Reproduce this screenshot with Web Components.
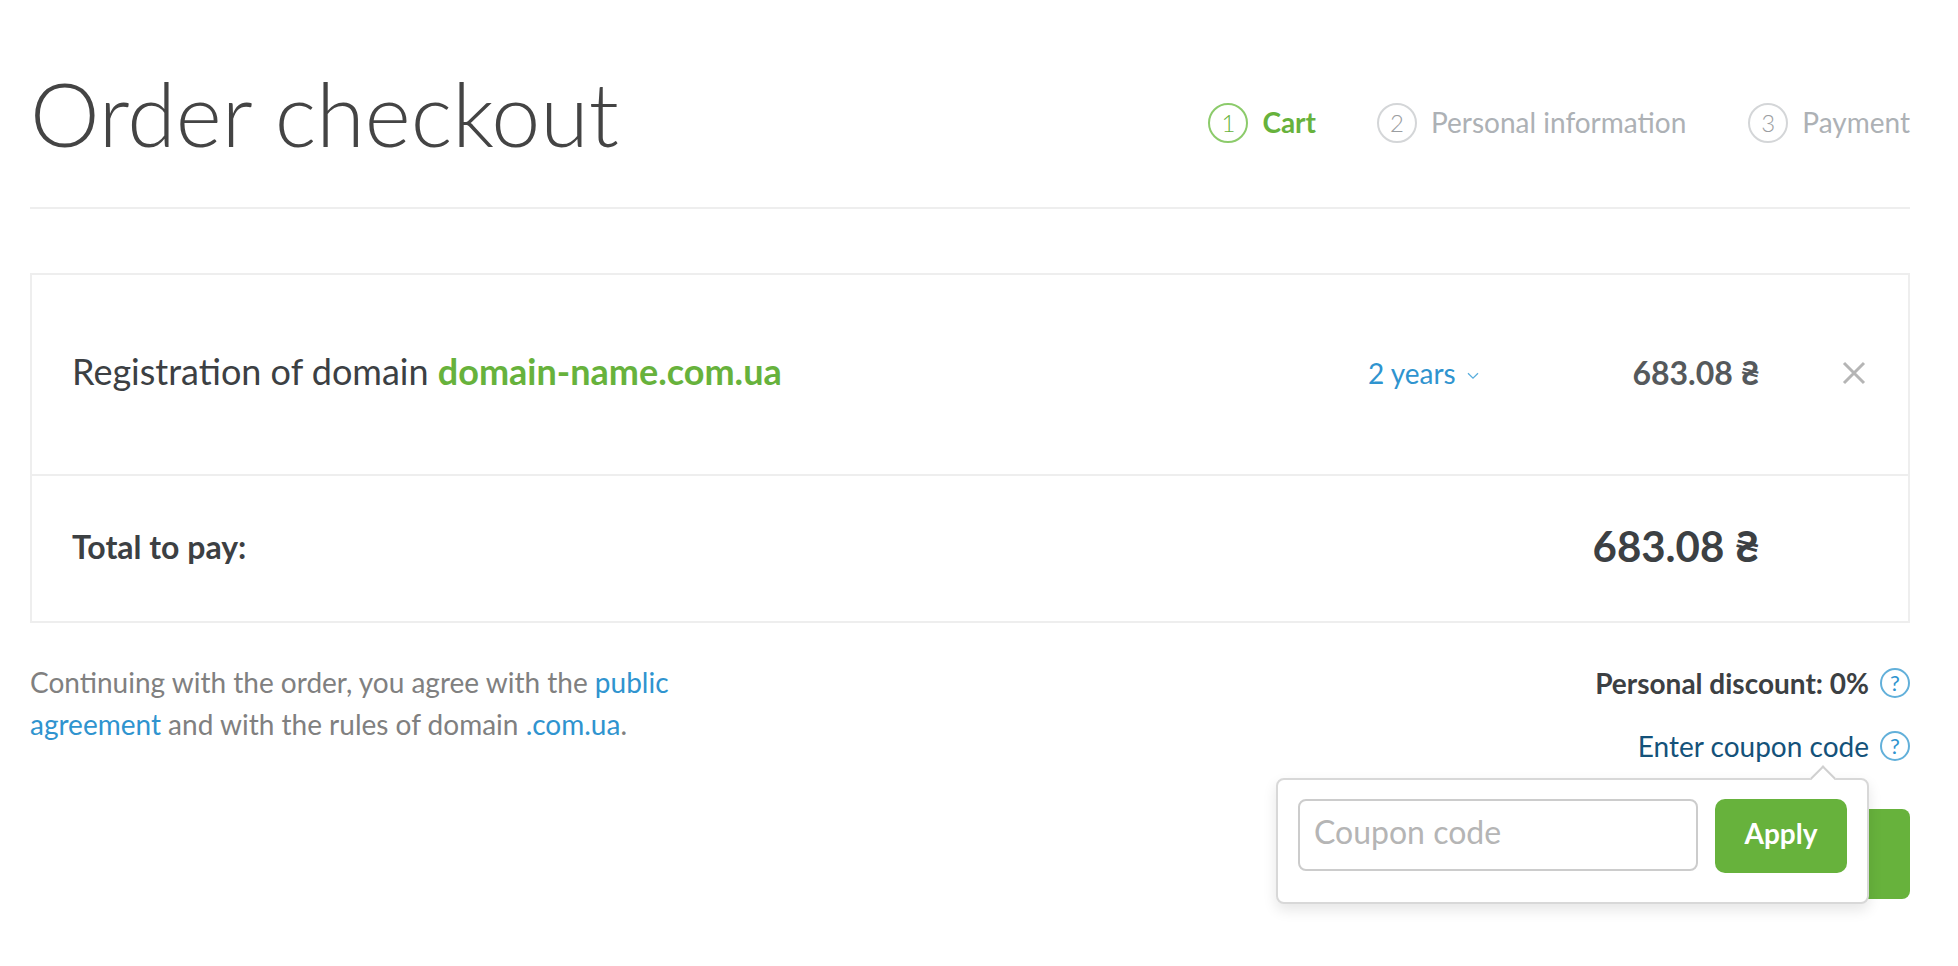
<!DOCTYPE html>
<html lang="en"><head><meta charset="utf-8"><title>Order checkout</title>
<style>html,body{margin:0;background:#fff}body{font-family:Lato,"Liberation Sans",sans-serif;color:#3c4043}</style></head>
<body>
<order-page></order-page>
<script>
const def=(name,html,init)=>customElements.define(name,class extends HTMLElement{constructor(){super();this.attachShadow({mode:'open'}).innerHTML=html;if(init)init.call(this)}});
const qmark=`<svg width="30" height="30" viewBox="0 0 30 30"><circle cx="15" cy="15" r="14" fill="none" stroke="#62b0da" stroke-width="2"/><text x="15" y="23" text-anchor="middle" font-family="Lato" font-size="22" font-weight="400" fill="#2f94cf">?</text></svg>`;
def('help-icon',`<style>:host{display:inline-flex;width:30px;height:30px;flex:none}</style>${qmark}`);
def('check-step',`<style>:host{display:flex;align-items:center;gap:14px;font-size:28px;color:#adb1b5}
.n{flex:none;box-sizing:border-box;width:40px;height:40px;border:2px solid #d4d6d8;border-radius:50%;display:flex;align-items:center;justify-content:center;font-size:24px;font-weight:300;color:#9b9ea1}
.t{margin-top:-2px}
:host([active]){color:#67b23c;font-weight:700;margin-right:-1px}:host([active]) .n{border-color:#8ccb6b;color:#67b23c;font-weight:300}</style>
<span class="n"><slot name="n"></slot></span><span class="t"><slot></slot></span>`);
def('check-header',`<style>:host{display:flex;justify-content:space-between;align-items:center;height:145px;border-bottom:2px solid #eee;box-sizing:content-box;padding-top:62px}
h1{margin:-43px 0 0;font-size:88px;font-weight:300;color:#444;line-height:1;letter-spacing:0}
nav{display:flex;gap:62px;margin-top:-24px}</style>
<h1>Order checkout</h1><nav><check-step active><span slot="n">1</span>Cart</check-step><check-step><span slot="n">2</span>Personal information</check-step><check-step><span slot="n">3</span>Payment</check-step></nav>`);
def('order-table',`<style>:host{display:block;border:2px solid #eee;margin-top:64px}
.row{display:flex;align-items:center;padding:0 40px}
.item{height:201px;border-bottom:2px solid #eee;font-size:36px;padding-bottom:4px;box-sizing:border-box}
.name{margin-top:-3px}
.name b{color:#67b23c}
.years{margin-left:auto;width:160px;color:#2f94cf;font-size:28px;display:flex;align-items:center;gap:11px}
.years svg{margin-top:7px}
.price{width:232px;text-align:right;font-weight:700;font-size:32px;color:#55595c;margin-top:-1px}
.years,.price{flex:none}
.x{margin-left:82px;margin-right:2px;width:24px;height:24px;display:block}
.total{height:145px;font-size:32px;font-weight:700;padding-bottom:4px;box-sizing:border-box}
.total .price{margin-left:auto;width:auto;font-size:42px;color:#3c4043;margin-right:108px;margin-top:-2px}</style>
<div class="row item"><span class="name">Registration of domain <b>domain-name.com.ua</b></span>
<span class="years">2 years<svg width="12" height="8" viewBox="0 0 12 8"><path d="M1 1.2l5 5 5-5" fill="none" stroke="#5aaedd" stroke-width="1.3"/></svg></span>
<span class="price">683.08 ₴</span>
<svg class="x" viewBox="0 0 24 24"><path d="M2 2l20 20M22 2L2 22" stroke="#b5b5b5" stroke-width="3" fill="none"/></svg></div>
<div class="row total"><span>Total to pay:</span><span class="price">683.08 ₴</span></div>`);
def('coupon-popover',`<style>:host{position:absolute;right:41px;top:116px;width:593px;height:126px;box-sizing:border-box;background:#fff;border:2px solid #d8d8d8;border-radius:8px;box-shadow:0 6px 14px rgba(0,0,0,.1);display:flex;align-items:center;gap:17px;padding:0 20px 12px}
.arrow{position:absolute;right:35px;top:-11px;width:18px;height:18px;box-sizing:border-box;background:#fff;border:solid #d0d0d0;border-width:2px 0 0 2px;transform:rotate(45deg)}
input{width:400px;height:72px;box-sizing:border-box;border:2px solid #ccc;border-radius:8px;padding:0 14px 8px;font:32px Lato,sans-serif;color:#333;outline:none;background:#fff}
input::placeholder{color:#b5b5b5;opacity:1}
button{width:134px;height:74px;border:0;border-radius:10px;background:#67b23c;color:#fff;font:700 28px Lato,sans-serif;padding:0 0 6px;margin-top:1px}</style>
<span class="arrow"></span><input placeholder="Coupon code"><button>Apply</button>`);
def('order-footer',`<style>:host{display:flex;justify-content:space-between;margin-top:39px;position:relative;height:275px;font-size:28px}
p{margin:-1px 0 0;width:660px;color:#808080;line-height:42px}a{color:#2f94cf;text-decoration:none}
.r{display:flex;flex-direction:column;align-items:flex-end}
.l{display:flex;align-items:center;gap:11px;height:42px}
.d{font-weight:700;margin-bottom:21px}.c{color:#14527a}
.go{margin-top:42px;width:300px;height:90px;background:#67b23c;border-radius:8px}</style>
<p>Continuing with the order, you agree with the <a>public</a> <a>agreement</a> and with the rules of domain <a>.com.ua</a>.</p>
<div class="r"><div class="l d">Personal discount: 0%<help-icon></help-icon></div><div class="l c">Enter coupon code<help-icon></help-icon></div><div class="go"></div></div>
<coupon-popover></coupon-popover>`);
def('order-page',`<style>:host{display:block;padding:0 48px 0 30px}</style><check-header></check-header><order-table></order-table><order-footer></order-footer>`);
</script>
</body></html>
